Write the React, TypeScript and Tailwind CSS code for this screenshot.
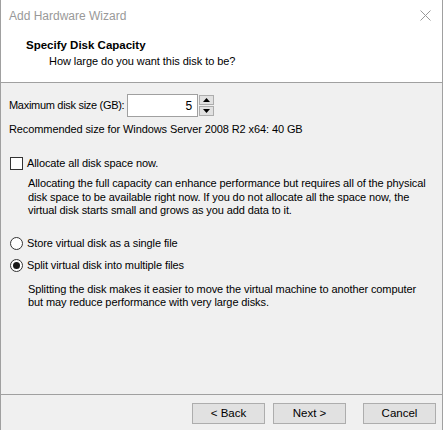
import React from "react";

const font = { fontFamily: '"Liberation Sans", Arial, sans-serif' };

function Checkbox() {
  return <div className="w-[13px] h-[13px] border border-[#333333] bg-white shrink-0" />;
}

function Radio({ checked }: { checked?: boolean }) {
  return (
    <div className="w-[13px] h-[13px] rounded-full border border-[#333333] bg-white shrink-0 flex items-center justify-center">
      {checked && <div className="w-[7px] h-[7px] rounded-full bg-[#1a1a1a]" />}
    </div>
  );
}

function Btn({ label }: { label: string }) {
  return (
    <div className="w-[73px] h-[21px] border border-[#adadad] bg-[#e1e1e1] flex items-center justify-center text-[11.5px] text-black">
      {label}
    </div>
  );
}

export default function App() {
  return (
    <div className="w-[444px] h-[430px] bg-white text-black whitespace-nowrap" style={font}>
      <div className="w-[443px] h-[430px] border-l border-r border-[#a0a0a0] flex flex-col">
        {/* title bar */}
        <div className="h-[31px] bg-white flex items-center justify-between pl-[8px] pr-[10px] shrink-0">
          <span className="text-[12px] text-[#999999]">Add Hardware Wizard</span>
          <svg width="11" height="11" viewBox="0 0 11 11" className="mr-[1px]">
            <path d="M0.5 0.5 L10.5 10.5 M10.5 0.5 L0.5 10.5" stroke="#999999" strokeWidth="1" />
          </svg>
        </div>
        {/* header */}
        <div className="h-[51px] bg-white shrink-0 pl-[25px] pt-[6px]">
          <div className="text-[11.5px] font-bold leading-[16px]">Specify Disk Capacity</div>
          <div className="text-[11px] leading-[16px] pl-[23px] tracking-[-0.05px]">How large do you want this disk to be?</div>
        </div>
        <div className="h-px bg-[#a0a0a0] shrink-0" />
        {/* body */}
        <div className="flex-1 bg-[#f0f0f0] flex flex-col text-[11px] tracking-[-0.1px]">
          <div className="flex items-center mt-[11px] pl-[8px] h-[23px]">
            <div className="w-[118px] tracking-[-0.3px]">
              <span>Maximum disk size (GB):</span>
            </div>
            <div className="w-[71px] h-[23px] border border-[#a0a0a0] bg-white flex items-center justify-end pr-[5px] text-[12px]">5</div>
            <div className="flex flex-col ml-[1px] gap-[1px]">
              <div className="w-[15px] h-[10px] bg-[#e1e1e1] border border-[#adadad] flex items-center justify-center">
                <svg width="7" height="4" viewBox="0 0 7 4"><path d="M3.5 0 L7 4 L0 4 Z" fill="#000" /></svg>
              </div>
              <div className="w-[15px] h-[10px] bg-[#e1e1e1] border border-[#adadad] flex items-center justify-center">
                <svg width="7" height="4" viewBox="0 0 7 4"><path d="M0 0 L7 0 L3.5 4 Z" fill="#000" /></svg>
              </div>
            </div>
          </div>
          <div className="mt-[5px] pl-[8px] h-[15px] leading-[15px]">Recommended size for Windows Server 2008 R2 x64: 40 GB</div>
          <div className="flex items-center gap-[4px] mt-[19px] pl-[9px] h-[15px]">
            <Checkbox />
            <span>Allocate all disk space now.</span>
          </div>
          <div className="pl-[27px] mt-[6px] leading-[13.5px] pr-[10px]">
            Allocating the full capacity can enhance performance but requires all of the physical<br />
            disk space to be available right now. If you do not allocate all the space now, the<br />
            virtual disk starts small and grows as you add data to it.
          </div>
          <div className="flex items-center gap-[4px] mt-[18px] pl-[9px] h-[15px]">
            <Radio />
            <span>Store virtual disk as a single file</span>
          </div>
          <div className="flex items-center gap-[4px] mt-[7px] pl-[9px] h-[15px]">
            <Radio checked />
            <span>Split virtual disk into multiple files</span>
          </div>
          <div className="pl-[27px] mt-[10px] leading-[13.5px]">
            Splitting the disk makes it easier to move the virtual machine to another computer<br />
            but may reduce performance with very large disks.
          </div>
          <div className="flex-1" />
          <div className="h-px bg-[#a0a0a0]" />
          <div className="flex justify-end gap-[8px] pt-[8px] pr-[6px] h-[35px] tracking-normal">
            <Btn label="< Back" />
            <Btn label="Next >" />
            <div className="w-px" />
            <Btn label="Cancel" />
          </div>
        </div>
      </div>
    </div>
  );
}
